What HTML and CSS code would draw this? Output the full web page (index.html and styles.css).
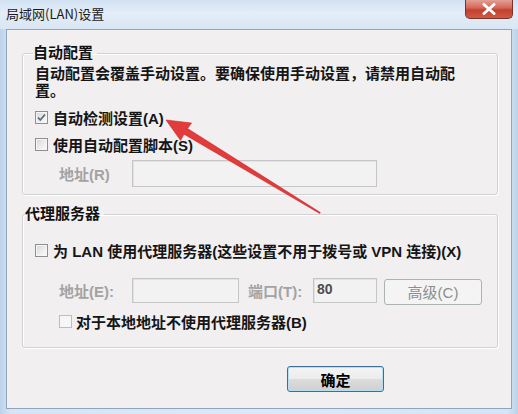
FILE: index.html
```
<!DOCTYPE html>
<html lang="zh-CN">
<head>
<meta charset="utf-8">
<title>局域网(LAN)设置</title>
<link rel="stylesheet" href="styles.css">
</head>
<body>
<div class="window">
  <div class="titlebar">
    <span class="title">局域网(LAN)设置</span>
    <div class="close">
      <svg width="16" height="12" viewBox="0 0 16 12"><path d="M3 1.5 L13 10.5 M13 1.5 L3 10.5" stroke="#fff" stroke-width="3" stroke-linecap="round"/></svg>
    </div>
  </div>
  <div class="client">
    <fieldset class="group group-auto">
      <legend class="legend legend-auto">自动配置</legend>
      <div class="group-body body-auto">
        <p class="note">自动配置会覆盖手动设置。要确保使用手动设置，请禁用自动配置。</p>
        <div class="check-row row-detect">
          <span class="cb">
            <svg width="11" height="11" viewBox="0 0 11 11"><path d="M2 5.5 L4.3 8 L9 2.5" fill="none" stroke="#5a6a7c" stroke-width="1.8"/></svg>
          </span>
          <span>自动检测设置(A)</span>
        </div>
        <div class="check-row row-script">
          <span class="cb"></span>
          <span>使用自动配置脚本(S)</span>
        </div>
        <div class="field-row row-addr">
          <span class="label-dis label-r">地址(R)</span>
          <span class="input input-script"></span>
        </div>
      </div>
    </fieldset>
    <fieldset class="group group-proxy">
      <legend class="legend legend-proxy">代理服务器</legend>
      <div class="group-body body-proxy">
        <div class="check-row row-proxy">
          <span class="cb"></span>
          <span>为 LAN 使用代理服务器(这些设置不用于拨号或 VPN 连接)(X)</span>
        </div>
        <div class="field-row row-server">
          <span class="label-dis label-e">地址(E):</span>
          <span class="input input-addr"></span>
          <span class="label-dis label-t">端口(T):</span>
          <span class="input input-port">80</span>
          <span class="btn btn-adv">高级(C)</span>
        </div>
        <div class="check-row row-bypass">
          <span class="cb cb-dis"></span>
          <span>对于本地地址不使用代理服务器(B)</span>
        </div>
      </div>
    </fieldset>
    <div class="footer">
      <span class="btn btn-ok">确定</span>
    </div>
  </div>
  <svg class="arrow" width="518" height="414" viewBox="0 0 518 414">
    <polygon points="166,120 191.5,123 187.6,128.6 320.4,212.6 319.6,213.4 184,134.2 180.6,140.5" fill="#e23b3b" stroke="#c92c2c" stroke-width="0.6" stroke-linejoin="round"/>
  </svg>
</div>
</body>
</html>
```
FILE: styles.css
```
html, body {
  margin: 0;
  padding: 0;
}
body {
  width: 518px;
  height: 414px;
  overflow: hidden;
  font-family: "Liberation Sans", "Noto Sans CJK SC", sans-serif;
  color: #151515;
}
.window {
  position: relative;
  width: 518px;
  height: 414px;
  box-sizing: border-box;
  padding: 0 6px 5px 6px;
  display: flex;
  flex-direction: column;
  background: linear-gradient(90deg, #bcd2ea 0%, #d6e4f3 2%, #dde8f5 50%, #d6e4f3 98%, #bcd2ea 100%);
}
.titlebar {
  height: 29px;
  flex: none;
  display: flex;
  justify-content: space-between;
  align-items: flex-start;
  margin: 0 -6px;
  padding: 0 5px 0 6px;
  background: linear-gradient(180deg, #d2e2f3 0%, #e4edf8 45%, #d9e6f4 100%);
}
.title {
  font-family: "Noto Sans CJK SC", sans-serif;
  font-size: 13px;
  line-height: 29px;
  font-weight: 400;
  color: #1a1a1a;
  margin-top: -1px;
}
.close {
  width: 46px;
  height: 18px;
  border: 1px solid #7a3229;
  border-top: none;
  border-radius: 0 0 5px 5px;
  background: linear-gradient(180deg, #e3a096 0%, #d36553 45%, #c2402e 55%, #cf5a45 100%);
  display: flex;
  align-items: center;
  justify-content: center;
}
.client {
  flex: 1;
  border: 1px solid #8fa5bd;
  background: #f1eff0;
  display: flex;
  flex-direction: column;
}
.group {
  margin: 0 0 0 15px;
  padding: 0;
  width: 476px;
  box-sizing: border-box;
  min-width: 0;
  border: 1px solid #d2d2d2;
  border-radius: 3px;
  box-shadow: inset 1px 1px 0 #ffffff, 1px 1px 0 #ffffff;
}
.group-auto {
  margin-top: 15px;
}
.group-proxy {
  margin-top: 11px;
}
.legend {
  font-size: 15px;
  line-height: 16px;
  font-weight: 700;
  padding: 0 4px 0 0;
  color: #111;
}
.legend-auto {
  margin-left: 10px;
}
.legend-proxy {
  margin-left: 2px;
}
.group-body {
  padding: 0 0 0 12px;
  display: flex;
  flex-direction: column;
}
.body-auto {
  padding-top: 4px;
  padding-bottom: 7px;
}
.body-proxy {
  padding-top: 18px;
  padding-bottom: 16px;
}
.note {
  margin: 0;
  width: 428px;
  font-size: 15px;
  line-height: 17px;
  font-weight: 700;
}
.check-row {
  display: flex;
  align-items: center;
  height: 20px;
  gap: 5px;
  font-size: 15px;
  font-weight: 700;
  white-space: nowrap;
}
.row-detect {
  margin-top: 8px;
}
.row-script {
  margin-top: 7px;
}
.row-bypass {
  margin-top: 7px;
  margin-left: 24px;
  gap: 4px;
}
.cb {
  width: 11px;
  height: 11px;
  flex: none;
  border: 1px solid #8e8f8f;
  background: linear-gradient(135deg, #d6d6d6 0%, #efefef 60%, #fbfbfb 100%);
  box-shadow: inset 0 0 0 1px #f6f6f6;
  display: flex;
  align-items: center;
  justify-content: center;
}
.cb-dis {
  border-color: #bdbdbd;
  background: #f6f6f6;
}
.field-row {
  display: flex;
  align-items: center;
  margin-left: 24px;
  font-size: 15px;
}
.row-addr {
  margin-top: 6px;
  height: 27px;
}
.row-server {
  margin-top: 17px;
  height: 27px;
}
.label-dis {
  color: #a3a3a3;
  font-weight: 700;
  white-space: nowrap;
}
.label-r, .label-e {
  width: 73px;
}
.label-t {
  width: 65px;
  margin-left: 9px;
}
.input {
  height: 25px;
  box-sizing: border-box;
  border: 1px solid #c6c6c6;
  background: #f3f2f2;
  box-shadow: inset 1px 1px 0 #e2e2e2;
  font-size: 14px;
  font-weight: 700;
  color: #4d4d4d;
  padding: 0 3px;
  line-height: 20px;
}
.input-script {
  width: 245px;
  height: 27px;
}
.input-addr {
  width: 107px;
}
.input-port {
  width: 64px;
}
.btn {
  display: flex;
  align-items: center;
  justify-content: center;
  box-sizing: border-box;
  border-radius: 3px;
  font-size: 15px;
}
.btn-adv {
  width: 98px;
  height: 26px;
  margin-left: 7px;
  margin-top: 2px;
  border: 1px solid #adb2b5;
  background: #f4f4f4;
  color: #8d8d8d;
}
.footer {
  display: flex;
  padding-left: 280px;
  padding-top: 18px;
}
.btn-ok {
  width: 97px;
  height: 26px;
  border: 1px solid #3d6f96;
  background: linear-gradient(180deg, #f4f4f4 0%, #ececec 48%, #dcdcdc 52%, #d0d0d0 100%);
  box-shadow: inset 0 0 0 1px #b7dff3;
  font-weight: 700;
  color: #000;
}
.arrow {
  position: absolute;
  left: 0;
  top: 0;
  pointer-events: none;
}
```
